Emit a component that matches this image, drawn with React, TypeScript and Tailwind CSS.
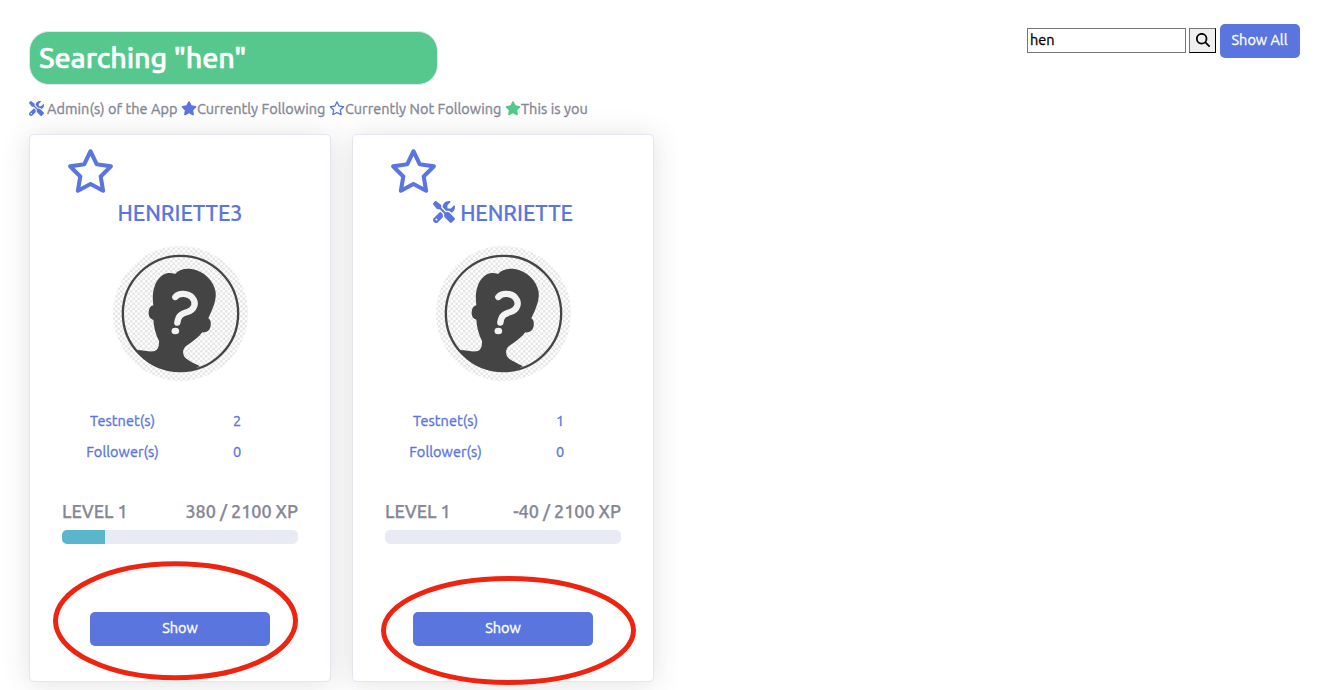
import React from "react";
import { FaStar, FaRegStar, FaScrewdriverWrench, FaMagnifyingGlass } from "react-icons/fa6";

function Avatar({ id }: { id: string }) {
  return (
    <svg viewBox="39 33 405 405" className="h-[135px] w-[135px] shrink-0">
      <defs>
        <pattern id={id} width="15" height="15" patternUnits="userSpaceOnUse">
          <rect width="15" height="15" fill="#fff" />
          <rect width="7.5" height="7.5" fill="#e6e6e6" />
          <rect x="7.5" y="7.5" width="7.5" height="7.5" fill="#e6e6e6" />
        </pattern>
      </defs>
      <circle cx="241.5" cy="235.5" r="202.5" fill={`url(#${id})`} />
      <circle cx="241.5" cy="235.5" r="173" fill="none" stroke="#444" strokeWidth="7" />
      <path
        fill="#444"
        d="M110 345 C130 346 145 350 160 349 C172 348 178 335 177 318 C167 298 161 275 160 254 C150 252 145 243 146 230 C147 219 152 213 160 211 C158 190 157 175 163 157 C169 134 185 117 205 114 C212 113 218 114 225 117 C236 104 255 99 275 102 C310 108 342 136 347 172 C349 195 341 216 325 250 C333 256 334 266 331 277 C328 288 320 293 307 292 C297 307 280 318 258 333 C250 340 247 350 251 361 C255 374 277 382 300 394 C280 405 262 410 241 410 C185 410 139 384 110 345Z"
      />
      <path
        d="M226 186 C238 172 264 175 276 187 C291 203 284 224 262 231 C241 237 235 243 232 263"
        fill="none"
        stroke="#f2f2f2"
        strokeWidth="19"
        strokeLinecap="round"
        strokeLinejoin="round"
      />
      <ellipse cx="226" cy="288" rx="11.5" ry="10" fill="#f2f2f2" />
    </svg>
  );
}

type CardProps = {
  name: string;
  admin?: boolean;
  testnets: number;
  followers: number;
  xp: number;
  children: React.ReactNode;
};

function UserCard({ name, admin, testnets, followers, xp, children }: CardProps) {
  return (
    <article className="relative flex h-[548px] w-[302px] flex-col rounded-[5px] border border-[#e3e6f0] bg-white px-8 shadow-[0_2px_28px_rgba(58,59,69,0.15)]">
      <FaRegStar className="mt-[14px] ml-[4px] h-[44px] w-[49px] shrink-0 text-[#5a76de]" />
      <h2 className="mt-[5px] flex h-[30px] items-center justify-center gap-[5px] text-[21.6px] leading-[30px] font-medium tracking-[-0.08px] text-[#5a76de] [-webkit-text-stroke:0.2px]">
        {admin && <FaScrewdriverWrench className="mb-[2px] h-[22px] w-[22px] [stroke-width:0]" />}
        <span>{name}</span>
      </h2>
      <div className="mt-[18px] flex justify-center">
        <Avatar id={`checks-${name}`} />
      </div>
      <dl className="mt-[24px] grid grid-cols-[121px_1fr] text-center text-[14.5px] leading-[31px] tracking-[0.05px] text-[#5a76de] [-webkit-text-stroke:0.35px]">
        <dt>Testnet(s)</dt>
        <dd className="pr-[7px]">{testnets}</dd>
        <dt>Follower(s)</dt>
        <dd className="pr-[7px]">{followers}</dd>
      </dl>
      <div className="mt-[31px] flex h-[27px] items-center justify-between text-[18px] font-medium tracking-[-0.05px] text-[#858796] [-webkit-text-stroke:0.25px]">
        <span>LEVEL 1</span>
        <span>{xp} / 2100 XP</span>
      </div>
      <div className="mt-[5px] h-[14px] shrink-0 overflow-hidden rounded-[5px] bg-[#e8ebf3]">
        <div className="h-full bg-[#5ab6ca]" style={{ width: `${Math.max(0, (xp / 2100) * 100)}%` }} />
      </div>
      <button className="mx-[28px] mt-[68px] h-[34px] shrink-0 rounded-[5px] bg-[#5a76de] pb-[2px] text-[14.5px] text-white [-webkit-text-stroke:0.35px]">
        Show
      </button>
      {children}
    </article>
  );
}

export default function App() {
  return (
    <main className="flex h-[690px] w-[1331px] flex-col overflow-hidden bg-white px-[29px] font-[Ubuntu,'Noto_Sans',sans-serif]">
      <header className="flex h-[84px] shrink-0 items-start justify-between">
        <h1 className="mt-[31px] flex h-[54px] w-[409px] items-center rounded-[20px] border border-[#e3e6f0] bg-[#57c88d] px-[9px] text-[28.8px] font-medium tracking-[-0.12px] text-white [-webkit-text-stroke:0.6px]">
          Searching "hen"
        </h1>
        <form className="mt-6 mr-[2px] flex items-center text-[14.5px] [-webkit-text-stroke:0.3px]">
          <input
            defaultValue="hen"
            className="mb-[2px] h-[25px] w-[159px] border border-[#767676] bg-white px-[2px] pb-px text-black outline-none"
          />
          <button
            type="button"
            className="mb-[2px] ml-[3px] flex h-[25px] w-[27px] items-center justify-center border border-t-[#767676] border-r-black border-b-black border-l-[#767676] bg-[#efefef] text-black"
          >
            <FaMagnifyingGlass className="mb-px ml-px h-[14px] w-[14px]" />
          </button>
          <button type="button" className="ml-1 h-[34px] w-[80px] rounded-[5px] bg-[#5a76de] pr-px pb-[2px] pl-0 text-white">
            Show All
          </button>
        </form>
      </header>
      <p className="mt-[15px] flex h-5 shrink-0 items-center text-[14.5px] tracking-[0.04px] whitespace-nowrap text-[#858796] [-webkit-text-stroke:0.35px]">
        <FaScrewdriverWrench className="mb-px h-[15px] w-[15px] text-[#5a76de] [stroke-width:0]" />
        <span className="ml-[3px] w-[134px]">Admin(s) of the App</span>
        <FaStar className="mb-px h-[14.5px] w-4 text-[#5a76de]" />
        <span className="w-[132px]">Currently Following</span>
        <FaRegStar className="mb-px h-[14.5px] w-4 text-[#5a76de] [stroke-width:0]" />
        <span className="w-[160px]">Currently Not Following</span>
        <FaStar className="mb-px h-[14.5px] w-4 text-[#57c88d]" />
        <span>This is you</span>
      </p>
      <section className="mt-[15px] flex gap-[21px]">
        <UserCard name="HENRIETTE3" testnets={2} followers={0} xp={380}>
          <svg viewBox="0 0 246 120" className="absolute top-[426px] left-[22px] h-[120px] w-[246px]">
            <ellipse cx="123.5" cy="59.8" rx="120" ry="57" fill="none" stroke="#ef2410" strokeWidth="5" />
          </svg>
        </UserCard>
        <UserCard name="HENRIETTE" admin testnets={1} followers={0} xp={-40}>
          <svg viewBox="0 0 256 110" className="absolute top-[440px] left-[28px] h-[110px] w-[256px]">
            <ellipse cx="127.5" cy="55.5" rx="125" ry="52" fill="none" stroke="#ef2410" strokeWidth="5" />
          </svg>
        </UserCard>
      </section>
    </main>
  );
}
